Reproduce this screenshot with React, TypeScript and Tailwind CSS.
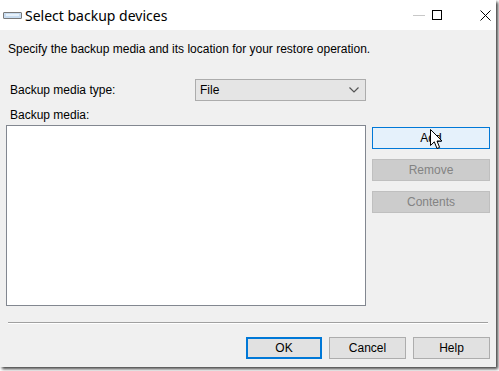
import React from 'react'

const font = { fontFamily: '"Liberation Sans", Arial, sans-serif' }

function WinButton({
  label,
  variant = 'normal',
  className = '',
}: {
  label: string
  variant?: 'normal' | 'default' | 'hover' | 'disabled'
  className?: string
}) {
  const styles = {
    normal: 'bg-[#e1e1e1] border border-[#adadad] text-black',
    default: 'bg-[#e1e1e1] border-2 border-[#0078d7] text-black',
    hover: 'bg-[#e5f1fb] border border-[#0078d7] text-black',
    disabled: 'bg-[#cccccc] border border-[#bfbfbf] text-[#838383]',
  }[variant]
  return (
    <div className={`h-[22px] flex items-center justify-center text-[12px] ${styles} ${className}`}>
      {label}
    </div>
  )
}

function Cursor() {
  return (
    <svg width="13" height="22" viewBox="0 0 13 22" className="absolute left-[430px] top-[129px]">
      <path
        d="M0.5 0.5 L0.5 16.5 L4.3 12.8 L7 19.5 L9.6 18.4 L7 12 L12 12 Z"
        fill="#fff"
        stroke="#000"
        strokeWidth="1"
        strokeLinejoin="miter"
      />
    </svg>
  )
}

export default function App() {
  return (
    <div className="w-[499px] h-[371px] bg-white relative overflow-hidden" style={font}>
      <div className="w-[496px] h-[367px] bg-[#f0f0f0] flex flex-col shadow-[2px_2px_3px_rgba(0,0,0,0.75)]">
        {/* Title bar */}
        <div className="h-[30px] bg-white flex items-center shrink-0">
          <div className="ml-[3px] w-[19px] h-[7px] border border-[#7a7a7a] bg-[#c8dcf0] rounded-[1px] flex items-center">
            <div className="mx-[2px] h-[2px] w-full bg-[#e8f2fb]" />
          </div>
          <div className="ml-[3px] text-[14px] text-black" style={{ fontFamily: '"Noto Sans", "Liberation Sans", sans-serif' }}>
            Select backup devices
          </div>
          <div className="ml-auto flex items-center h-full pr-[5px]">
            <div className="w-[12px] h-px bg-[#c8c8c8]" />
            <div className="ml-[7px] w-[10px] h-[10px] border border-black" />
            <svg width="11" height="11" viewBox="0 0 11 11" className="ml-[38px]">
              <path d="M0.5 0.5 L10.5 10.5 M10.5 0.5 L0.5 10.5" stroke="#000" strokeWidth="1" />
            </svg>
          </div>
        </div>

        {/* Body */}
        <div className="flex-1 flex flex-col px-[6px] text-[12px] text-black">
          <div className="mt-[12px] ml-[2px] leading-[14px]">
            Specify the backup media and its location for your restore operation.
          </div>

          <div className="mt-[23px] flex items-center">
            <div className="w-[189px] pl-[4px]">Backup media type:</div>
            <div className="w-[171px] h-[22px] bg-[#e5e5e5] border border-[#acacac] flex items-center pl-[4px] pr-[6px]">
              <span>File</span>
              <svg width="10" height="6" viewBox="0 0 10 6" className="ml-auto">
                <path d="M0.5 0.5 L5 5 L9.5 0.5" fill="none" stroke="#555" strokeWidth="1.2" />
              </svg>
            </div>
          </div>

          <div className="mt-[7px] pl-[4px] leading-[14px]">Backup media:</div>

          <div className="mt-[3px] flex gap-[6px]">
            <div className="w-[360px] h-[181px] bg-white border border-[#828790]" />
            <div className="w-[118px] flex flex-col gap-[10px] pt-[2px]">
              <WinButton label="Add" variant="hover" />
              <WinButton label="Remove" variant="disabled" />
              <WinButton label="Contents" variant="disabled" />
            </div>
          </div>

          <div className="mt-[16px] mx-[2px] h-px bg-[#a0a0a0] border-b border-white box-content" />

          <div className="mt-[13px] flex justify-end gap-[7px]">
            <WinButton label="OK" variant="default" className="w-[76px]" />
            <WinButton label="Cancel" className="w-[77px]" />
            <WinButton label="Help" className="w-[77px]" />
          </div>
        </div>
      </div>
      <Cursor />
    </div>
  )
}
